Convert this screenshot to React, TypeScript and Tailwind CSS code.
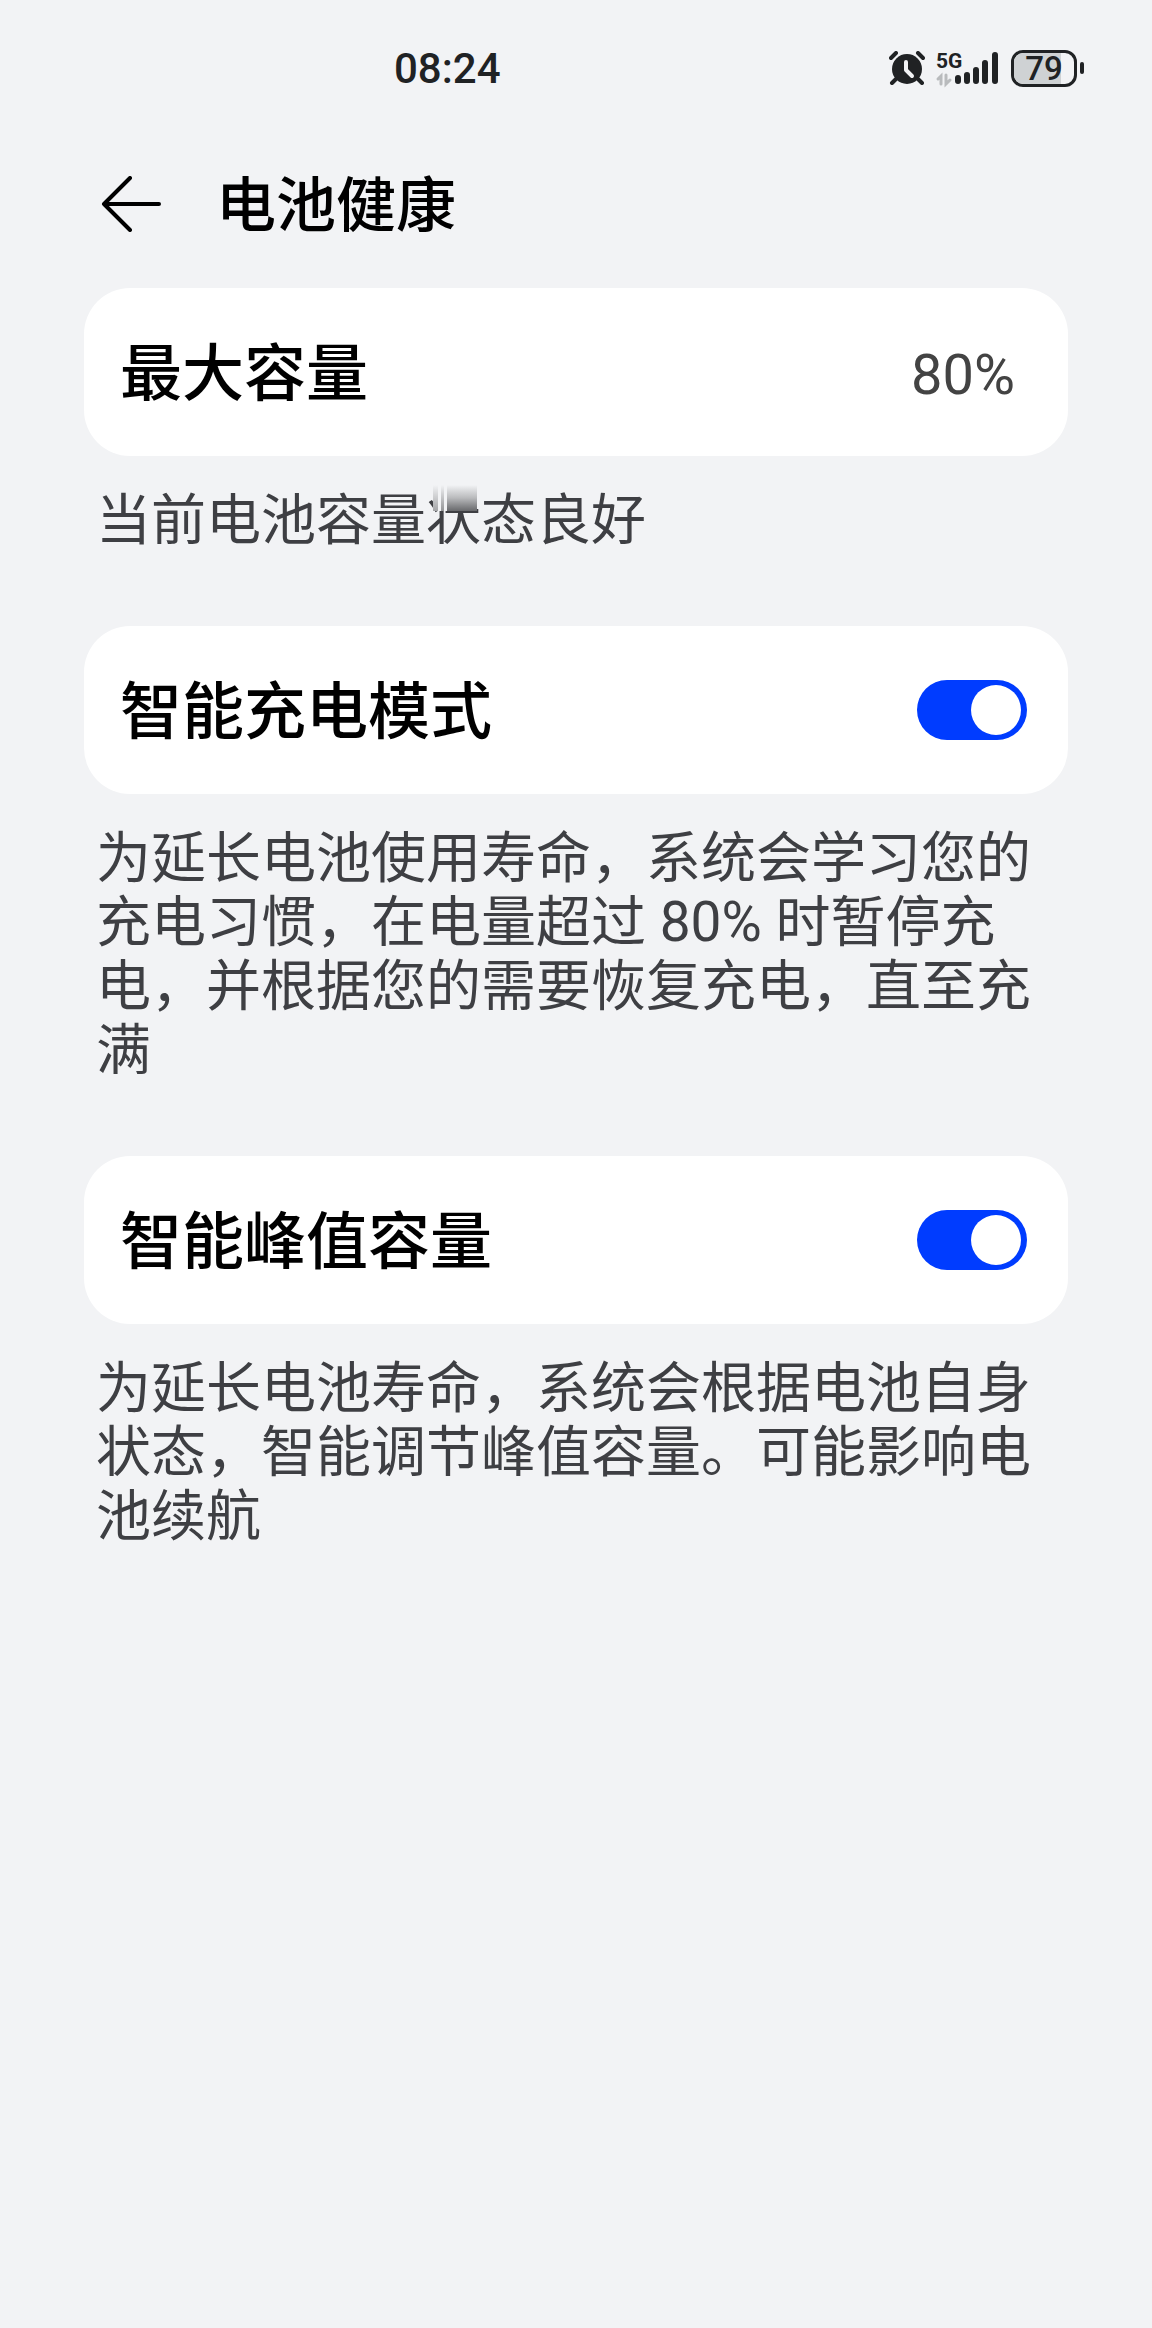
import React, { useId, useState } from "react";

interface SettingCardProps {
  title: string;
  description: React.ReactNode;
  children: (labelId: string) => React.ReactNode;
}

// White rounded row with a caption underneath
const SettingCard: React.FC<SettingCardProps> = ({ title, description, children }) => {
  const id = useId();

  return (
    <section>
      <div className="flex min-h-[168px] items-center justify-between rounded-[46px] bg-white pl-9 pr-[41px]">
        <label htmlFor={id} className="pt-1.5 text-[62px] leading-[72px] font-medium text-black">
          {title}
        </label>
        {children(id)}
      </div>
      <p className="mt-8 px-3 text-[55px] leading-[64px] text-[#3e3f43]">{description}</p>
    </section>
  );
};

const Toggle: React.FC<{ id: string }> = ({ id }) => {
  const [on, setOn] = useState(true);

  return (
    <input
      id={id}
      type="checkbox"
      role="switch"
      checked={on}
      onChange={() => setOn(!on)}
      className="
        flex h-[60px] w-[110px] shrink-0 appearance-none items-center rounded-full
        bg-gray-300 px-1.5 checked:justify-end checked:bg-[#003cff]
        before:block before:size-[50px] before:rounded-full before:bg-white before:content-['']
      "
    />
  );
};

// Character whose upper half is covered by vertical grey streaks
const SmudgedChar: React.FC<{ char: string }> = ({ char }) => (
  <span className="relative inline-block">
    {char}
    <span className="absolute -top-[3px] left-[7px] flex h-[26px] w-11 gap-[3px] bg-[#f2f3f5]">
      <span className="w-[5px] bg-linear-to-b from-[#f2f3f5] to-[#a4a5a7]" />
      <span className="w-[3px] bg-linear-to-b from-[#f2f3f5] to-[#949597]" />
      <span className="flex-1 bg-linear-to-b from-[#f2f3f5] via-[#b9babc] to-[#68696c]" />
    </span>
  </span>
);

const AlarmIcon = () => (
  <svg viewBox="0 0 36 34" className="h-[34px] w-9" fill="none" strokeLinecap="round">
    <circle cx="18" cy="18" r="15" fill="#202224" />
    <path d="M2 7 7 2M29 2l5 5M7 28l-4 4M29 28l4 4" stroke="#202224" strokeWidth="4" />
    <path d="M17 11v8l6 6" stroke="#f2f3f5" strokeWidth="4" strokeLinejoin="round" />
  </svg>
);

const SignalIcon = () => (
  <svg viewBox="0 0 66 36" className="h-9 w-[66px] overflow-visible" strokeLinecap="round">
    <text x="1" y="18" fontSize="21" fontWeight="700" fill="#202224">
      5G
    </text>
    <path d="M6 34V26L3 29M11 25v9l4-4" fill="none" stroke="#b9bbbd" strokeWidth="3" />
    <path
      d="M23 28v3M32 25v6M41 20v11M50 13v18M60 5v26"
      stroke="#202224"
      strokeWidth="6"
    />
  </svg>
);

const Battery: React.FC<{ level: number }> = ({ level }) => (
  <div className="flex items-center gap-[3px]">
    <div className="relative flex h-[37px] w-[66px] items-center justify-center overflow-hidden rounded-xl border-[3px] border-[#202224]">
      <div className="absolute inset-y-0 left-0 bg-[#cfd2d4]" style={{ width: `${level}%` }} />
      <span className="relative text-[33px] leading-none font-medium">{level}</span>
    </div>
    <div className="h-3 w-1 rounded-full bg-[#202224]" />
  </div>
);

const App: React.FC = () => {
  return (
    <div
      lang="zh-CN"
      className="min-h-screen bg-[#f2f3f5] font-[Roboto,'Noto_Sans_CJK_SC',sans-serif]"
    >
      {/* Status bar */}
      <div className="flex h-[136px] items-center justify-between pl-[394px] pr-[68px] text-[#202224]">
        <span className="pt-0.5 text-[42px] leading-none font-medium">08:24</span>
        <div className="flex items-center gap-2.5">
          <AlarmIcon />
          <SignalIcon />
          <Battery level={79} />
        </div>
      </div>

      {/* Title bar */}
      <header className="flex h-[136px] items-center gap-[54px] px-[100px]">
        <button type="button" aria-label="返回">
          <svg
            viewBox="0 0 62 56"
            className="h-14 w-[62px]"
            fill="none"
            stroke="black"
            strokeWidth="4"
            strokeLinecap="round"
            strokeLinejoin="round"
          >
            <path d="M59 28H4M30 2 4 28l26 26" />
          </svg>
        </button>
        <h1 className="pt-1.5 text-[60px] leading-[72px] font-medium text-black">电池健康</h1>
      </header>

      <main className="flex flex-col gap-[74px] px-[84px] pt-4 pb-20">
        <SettingCard
          title="最大容量"
          description={
            <>
              当前电池容量
              <SmudgedChar char="状" />
              态良好
            </>
          }
        >
          {(id) => (
            <output id={id} className="pt-1.5 pr-3 text-[56px] leading-[64px] text-[#434343]">
              80%
            </output>
          )}
        </SettingCard>
        <SettingCard
          title="智能充电模式"
          description="为延长电池使用寿命，系统会学习您的充电习惯，在电量超过 80% 时暂停充电，并根据您的需要恢复充电，直至充满"
        >
          {(id) => <Toggle id={id} />}
        </SettingCard>
        <SettingCard
          title="智能峰值容量"
          description="为延长电池寿命，系统会根据电池自身状态，智能调节峰值容量。可能影响电池续航"
        >
          {(id) => <Toggle id={id} />}
        </SettingCard>
      </main>
    </div>
  );
};

export default App;
